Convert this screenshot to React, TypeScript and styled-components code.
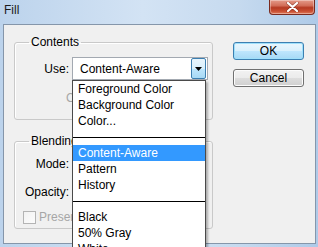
import React from 'react';
import styled, { createGlobalStyle } from 'styled-components';

const GlobalStyle = createGlobalStyle`
	html, body {
		margin: 0;
		padding: 0;
		width: 318px;
		height: 247px;
		overflow: hidden;
	}

	body {
		font-family: "Liberation Sans", Arial, sans-serif;
		font-size: 12px;
		color: #000;
	}
`;

const Window = styled.div`
	width: 318px;
	height: 247px;
	display: flex;
	flex-direction: column;
	background: linear-gradient(90deg, #bcd3ec 0%, #d3e3f4 45%, #c6daef 75%, #aecae8 100%);
	box-sizing: border-box;
`;

const TitleBar = styled.div`
	height: 24px;
	flex: none;
	display: flex;
	align-items: flex-start;
`;

const Title = styled.span`
	padding-left: 4px;
	line-height: 20px;
	color: #1b1b1b;
`;

const CloseButton = styled.div`
	margin-left: auto;
	margin-right: 3px;
	width: 46px;
	height: 15px;
	box-sizing: border-box;
	border: 1px solid #7a2a1f;
	border-top: none;
	border-radius: 0 0 4px 4px;
	background: linear-gradient(180deg, #e49b8a 0%, #d26e59 40%, #b53a23 55%, #c94f33 80%, #e07c5c 100%);
	box-shadow: inset 0 0 0 1px rgba(255, 255, 255, 0.35);
	display: flex;
	align-items: center;
	justify-content: center;
`;

const Client = styled.div`
	flex: 1;
	margin: 0 2px 3px 3px;
	border: 1px solid #8596aa;
	background: #f0f0f0;
	display: flex;
	align-items: flex-start;
	padding: 10px 0 0 10px;
`;

const LeftColumn = styled.div`
	display: flex;
	flex-direction: column;
	gap: 14px;
`;

const Group = styled.fieldset`
	margin: 0;
	padding: 0;
	width: 199px;
	box-sizing: border-box;
	border: 1px solid #c9c9c9;
	border-radius: 3px;
	box-shadow: inset 1px 1px 0 #fff;
`;

const Legend = styled.legend`
	margin-left: 14px;
	padding: 0 2px;
	line-height: 15px;
`;

const GroupBody = styled.div<{ $top: number; $bottom: number }>`
	display: flex;
	flex-direction: column;
	padding: ${(p) => p.$top}px 0 ${(p) => p.$bottom}px 0;
`;

const FieldRow = styled.div<{ $gap?: number }>`
	display: grid;
	grid-template-columns: 54px auto;
	column-gap: 3px;
	align-items: center;
	margin-top: ${(p) => p.$gap ?? 0}px;
`;

const Label = styled.span`
	text-align: right;
`;

const SelectBox = styled.div<{ $width: number; $height: number }>`
	position: relative;
	width: ${(p) => p.$width}px;
	height: ${(p) => p.$height}px;
	box-sizing: border-box;
	border: 1px solid #a3a9b1;
	background: #fff;
	display: flex;
	align-items: center;
`;

const SelectText = styled.span`
	padding-left: 7px;
`;

const ArrowButton = styled.div`
	margin-left: auto;
	margin-right: 1px;
	width: 15px;
	height: 100%;
	box-sizing: border-box;
	border: 1px solid #3c7fb1;
	border-radius: 2px;
	background: linear-gradient(180deg, #e8f5fd 0%, #d9f0fc 50%, #bee6fd 51%, #a7d9f5 100%);
	display: flex;
	align-items: center;
	justify-content: center;
`;

const DropList = styled.div`
	position: absolute;
	top: calc(100% + 1px);
	left: -1px;
	width: 134px;
	box-sizing: border-box;
	border: 1px solid #4a4a4a;
	background: #fff;
	box-shadow: 2px 2px 2px rgba(0, 0, 0, 0.28);
	z-index: 10;
`;

const Option = styled.div<{ $active?: boolean }>`
	height: 16px;
	line-height: 16px;
	padding-left: 5px;
	white-space: nowrap;
	background: ${(p) => (p.$active ? '#3399ff' : 'transparent')};
	color: ${(p) => (p.$active ? '#fff' : '#000')};
`;

const Separator = styled.div`
	height: 16px;
	display: flex;
	align-items: center;

	&::after {
		content: '';
		flex: 1;
		height: 1px;
		margin-top: 1px;
		background: #000;
	}
`;

const DisabledText = styled.span`
	color: #a6a6a6;
`;

const PatternRow = styled.div`
	margin-top: 8px;
	padding-left: 51px;
	line-height: 20px;
`;

const InputBox = styled.div`
	width: 40px;
	height: 20px;
	box-sizing: border-box;
	border: 1px solid #a3a9b1;
	background: #fff;
`;

const CheckRow = styled.div`
	margin-top: 8px;
	padding-left: 8px;
	display: flex;
	align-items: center;
	gap: 3px;
	line-height: 14px;
`;

const CheckBox = styled.span`
	width: 13px;
	height: 13px;
	box-sizing: border-box;
	border: 1px solid #b4b4b4;
	background: linear-gradient(135deg, #f2f2f2, #fcfcfc);
`;

const ButtonColumn = styled.div`
	margin-left: 20px;
	margin-top: 7px;
	display: flex;
	flex-direction: column;
	gap: 9px;
`;

const Button = styled.div<{ $primary?: boolean }>`
	width: 71px;
	height: 18px;
	box-sizing: border-box;
	border: 1px solid ${(p) => (p.$primary ? '#3c7fb1' : '#707070')};
	border-radius: 3px;
	background: ${(p) =>
		p.$primary
			? 'linear-gradient(180deg, #eaf6fd 0%, #d9f0fc 50%, #bee6fd 51%, #a7d9f5 100%)'
			: 'linear-gradient(180deg, #f2f2f2 0%, #ebebeb 50%, #dddddd 51%, #cfcfcf 100%)'};
	box-shadow: inset 0 0 0 1px ${(p) => (p.$primary ? '#9fe0fb' : '#fcfcfc')};
	display: flex;
	align-items: center;
	justify-content: center;
	line-height: 16px;
`;

const fillOptions: (string | null)[] = [
	'Foreground Color',
	'Background Color',
	'Color...',
	null,
	'Content-Aware',
	'Pattern',
	'History',
	null,
	'Black',
	'50% Gray',
	'White',
];

const App = (): JSX.Element => {
	return (
		<>
			<GlobalStyle />
			<Window>
				<TitleBar>
					<Title>Fill</Title>
					<CloseButton>
						<svg width="13" height="10" viewBox="0 0 13 10">
							<path d="M2 1 L11 9 M11 1 L2 9" stroke="#5a1a10" strokeWidth="3.4" strokeLinecap="round" opacity="0.45" />
							<path d="M2 1 L11 9 M11 1 L2 9" stroke="#fff" strokeWidth="2.2" strokeLinecap="round" />
						</svg>
					</CloseButton>
				</TitleBar>
				<Client>
					<LeftColumn>
						<Group>
							<Legend>Contents</Legend>
							<GroupBody $top={7} $bottom={11}>
								<FieldRow>
									<Label>Use:</Label>
									<SelectBox $width={136} $height={23}>
										<SelectText>Content-Aware</SelectText>
										<ArrowButton>
											<svg width="7" height="4" viewBox="0 0 7 4">
												<path d="M0 0 H7 L3.5 4 Z" fill="#000" />
											</svg>
										</ArrowButton>
										<DropList>
											{fillOptions.map((opt, i) =>
												opt === null ? (
													<Separator key={i} />
												) : (
													<Option key={i} $active={opt === 'Content-Aware'}>
														{opt}
													</Option>
												)
											)}
										</DropList>
									</SelectBox>
								</FieldRow>
								<PatternRow>
									<DisabledText>Custom Pattern:</DisabledText>
								</PatternRow>
							</GroupBody>
						</Group>
						<Group>
							<Legend>Blending</Legend>
							<GroupBody $top={4} $bottom={4}>
								<FieldRow>
									<Label>Mode:</Label>
									<SelectBox $width={120} $height={21}>
										<SelectText>Normal</SelectText>
									</SelectBox>
								</FieldRow>
								<FieldRow $gap={8}>
									<Label>Opacity:</Label>
									<InputBox />
								</FieldRow>
								<CheckRow>
									<CheckBox />
									<DisabledText>Preserve Transparency</DisabledText>
								</CheckRow>
							</GroupBody>
						</Group>
					</LeftColumn>
					<ButtonColumn>
						<Button $primary>OK</Button>
						<Button>Cancel</Button>
					</ButtonColumn>
				</Client>
			</Window>
		</>
	);
};

export default App;
